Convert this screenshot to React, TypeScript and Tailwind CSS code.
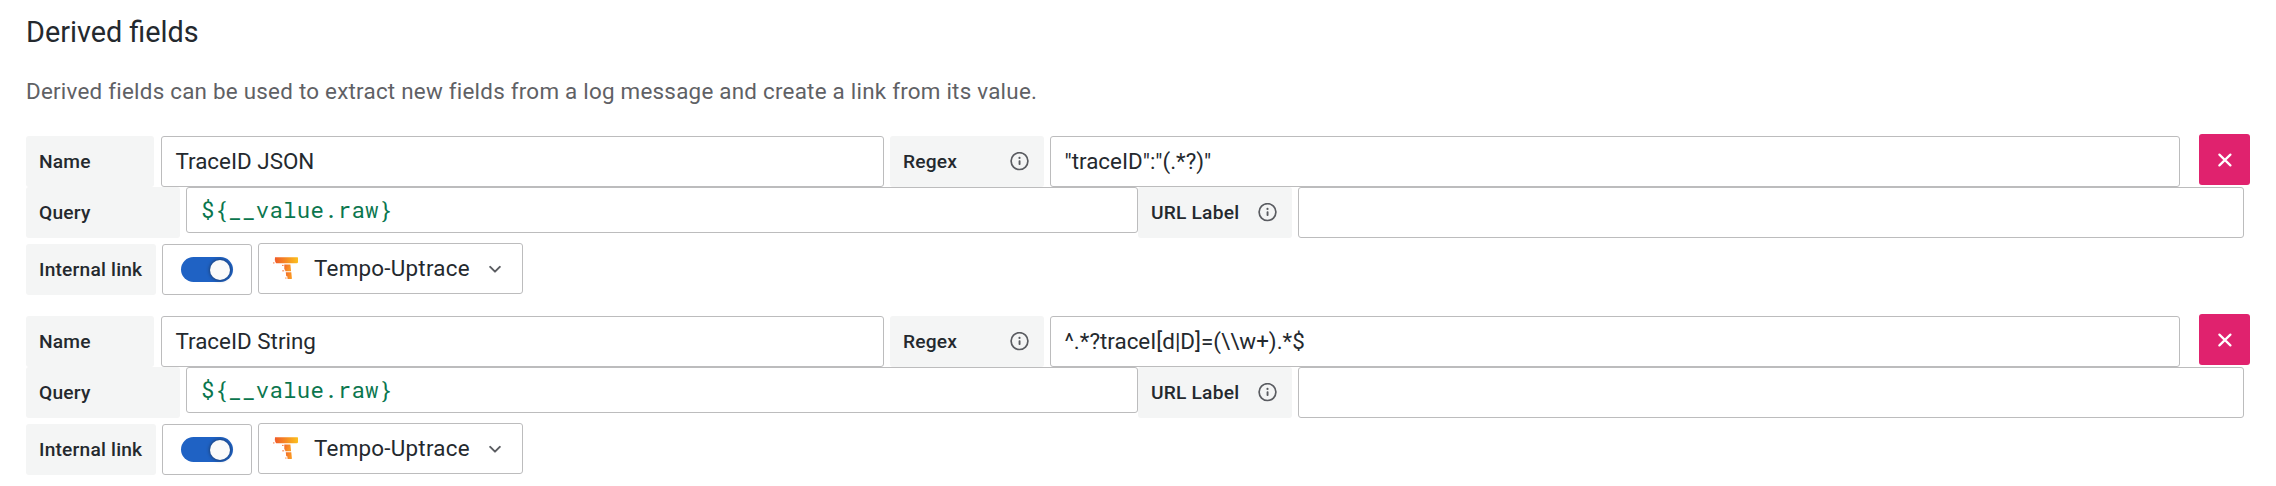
type DerivedField = {
  name: string;
  regex: string;
  query: string;
  source: string;
};

const fields: DerivedField[] = [
  { name: 'TraceID JSON', regex: '"traceID":"(.*?)"', query: '${__value.raw}', source: 'Tempo-Uptrace' },
  { name: 'TraceID String', regex: '^.*?traceI[d|D]=(\\\\w+).*$', query: '${__value.raw}', source: 'Tempo-Uptrace' },
];

function InfoIcon() {
  return (
    <svg className="h-[19px] w-[19px]" viewBox="0 0 19 19" fill="none">
      <circle cx="9.5" cy="9.1" r="8.4" stroke="#5a5c61" strokeWidth="1.7" />
      <rect x="8.6" y="8.3" width="1.9" height="4.8" rx="0.8" fill="#5a5c61" />
      <circle cx="9.5" cy="5.9" r="1.1" fill="#5a5c61" />
    </svg>
  );
}

function TempoLogo({ id }: { id: string }) {
  return (
    <svg className="h-[24px] w-[26px]" viewBox="0 0 26 24">
      <defs>
        <linearGradient id={id + '-bar'} x1="0" y1="0" x2="1" y2="0">
          <stop offset="0" stopColor="#f05a28" />
          <stop offset="1" stopColor="#fbc01e" />
        </linearGradient>
        <linearGradient id={id + '-stem'} x1="0" y1="0" x2="1" y2="0.4">
          <stop offset="0" stopColor="#f26a2b" />
          <stop offset="1" stopColor="#fa9a22" />
        </linearGradient>
      </defs>
      <path d="M2 .3H24.3Q25.2 .4 25 1.3V5.3Q24.8 6.3 23.8 6.3H3.2L2.6 5.2H2.2V3.6H1.8Z" fill={`url(#${id}-bar)`} />
      <rect x="0.2" y="5.4" width="1.2" height="1.1" fill="#f36b2a" />
      <g fill={`url(#${id}-stem)`}>
        <path d="M11.3 7.6H17.4L18.1 14.2H12.4L11.9 12.4H11.3Z" />
        <path d="M12.8 15.2H18.3L18.9 21.2Q18.9 22.1 18 22.1H14.6L14.3 19.2H13.2Z" />
      </g>
      <rect x="9" y="7.9" width="1.6" height="0.9" fill="#f36b2a" />
      <rect x="9.2" y="13.4" width="2" height="0.9" fill="#f36b2a" />
      <rect x="12.2" y="20.6" width="1.3" height="0.9" fill="#f36b2a" />
    </svg>
  );
}

function Label({ text, width, info }: { text: string; width: string; info?: boolean }) {
  return (
    <div
      className={`flex h-[51px] shrink-0 items-center justify-between rounded-[3px] bg-[#f4f5f5] pr-[15px] pl-[13px] text-[19.2px] font-medium tracking-[0.2px] whitespace-nowrap ${width}`}
    >
      <span className="pt-[2px]">{text}</span>
      {info && <InfoIcon />}
    </div>
  );
}

function TextBox({ value, width }: { value: string; width: string }) {
  return (
    <div
      className={`flex h-[51px] shrink-0 items-center rounded-[3px] border border-[#bcbcbd] bg-white pl-[13.5px] text-[22.4px] whitespace-pre ${width}`}
    >
      {value}
    </div>
  );
}

function FieldEditor({ field, id }: { field: DerivedField; id: string }) {
  return (
    <section className="mb-[21px]">
      <div className="flex">
        <Label text="Name" width="w-[128px] mr-[7px]" />
        <TextBox value={field.name} width="w-[723px] mr-[6px]" />
        <Label text="Regex" width="w-[154px] mr-[6px]" info />
        <TextBox value={field.regex} width="w-[1130px]" />
        <button className="-mt-[2px] ml-[19px] flex h-[51px] w-[51px] items-center justify-center rounded-[3px] bg-[#e0226e]">
          <svg className="h-[14px] w-[14px]" viewBox="0 0 14 14" fill="none">
            <path d="M1.4 1.6L12.4 12.4M12.4 1.6L1.4 12.4" stroke="#fff" strokeWidth="2.2" strokeLinecap="round" />
          </svg>
        </button>
      </div>
      <div className="flex items-start">
        <Label text="Query" width="w-[154px] mr-[6px]" />
        <div className="flex h-[46px] w-[952px] items-center rounded-[3px] border border-[#bcbcbd] bg-white pb-px pl-[14px] font-['Roboto_Mono','Liberation_Mono',monospace] text-[22.4px] tracking-[0.24px] text-[#0a764e]">
          {field.query}
        </div>
        <Label text="URL Label" width="w-[154px] mr-[6px]" info />
        <TextBox value="" width="w-[946px]" />
      </div>
      <div className="mt-[6px] flex items-start">
        <Label text="Internal link" width="w-[130px] mr-[6px]" />
        <div className="mr-[6px] flex h-[51px] w-[90px] items-center justify-center rounded-[3px] border border-[#bcbcbd] bg-white">
          <div className="flex h-[25px] w-[52px] items-center justify-end rounded-full bg-[#1f62c4] pr-[3px]">
            <div className="h-[20px] w-[20px] rounded-full bg-[#fafafa] shadow-[0_0_3px_1px_rgba(24,26,27,0.4)]" />
          </div>
        </div>
        <div className="-mt-px flex h-[51px] w-[265px] items-center rounded-[3px] border border-[#bcbcbd] bg-white pl-[14px] text-[22.4px]">
          <TempoLogo id={id} />
          <span className="ml-[15px] w-[156px] tracking-[0.24px] whitespace-nowrap">{field.source}</span>
          <svg className="ml-[19px] h-[8px] w-[12px]" viewBox="0 0 12 8" fill="none">
            <path d="M1.2 1.9L6 6.6L10.8 1.9" stroke="#5a5c61" strokeWidth="2" strokeLinecap="round" strokeLinejoin="round" />
          </svg>
        </div>
      </div>
    </section>
  );
}

export default function App() {
  return (
    <main className="h-[486px] w-[2276px] overflow-hidden bg-white pl-[26px] font-[Roboto,sans-serif] text-[#24292e]">
      <h3 className="pt-[14px] text-[28.8px] leading-[36px]">Derived fields</h3>
      <p className="mt-[24px] mb-[28px] text-[22.4px] leading-[34px] tracking-[0.24px] text-[#5f6165]">
        Derived fields can be used to extract new fields from a log message and create a link from its value.
      </p>
      {fields.map((field, i) => (
        <FieldEditor key={field.name} field={field} id={`tempo-${i}`} />
      ))}
    </main>
  );
}
